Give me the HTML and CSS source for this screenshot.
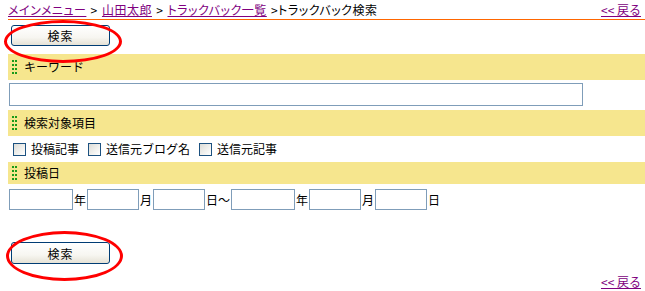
FILE: index.html
```html
<!DOCTYPE html>
<html lang="ja">
<head>
<meta charset="utf-8">
<title>トラックバック検索</title>
<link rel="stylesheet" href="styles.css">
</head>
<body>
<div class="page">
  <div class="header">
    <div class="crumbs"><a href="#">メインメニュー</a> &gt; <a href="#">山田太郎</a> &gt; <a href="#">トラックバック一覧</a> &gt;トラックバック検索</div>
    <a class="back" href="#">&lt;&lt; 戻る</a>
  </div>

  <div class="btn-row btn-row-top">
    <div class="btn-wrap mark-top"><button class="btn" type="button">検索</button></div>
  </div>

  <div class="sec"><span class="grip"><svg width="5" height="15" viewBox="0 0 5 15"><g fill="#1a9a1a"><rect x="0" y="0" width="2" height="2"/><rect x="3" y="0" width="2" height="2"/><rect x="0" y="4" width="2" height="2"/><rect x="3" y="4" width="2" height="2"/><rect x="0" y="8" width="2" height="2"/><rect x="3" y="8" width="2" height="2"/><rect x="0" y="12" width="2" height="2"/><rect x="3" y="12" width="2" height="2"/></g></svg></span><span class="sec-label">キーワード</span></div>
  <div class="kw-row"><input class="txt kw" type="text"></div>

  <div class="sec"><span class="grip"><svg width="5" height="15" viewBox="0 0 5 15"><g fill="#1a9a1a"><rect x="0" y="0" width="2" height="2"/><rect x="3" y="0" width="2" height="2"/><rect x="0" y="4" width="2" height="2"/><rect x="3" y="4" width="2" height="2"/><rect x="0" y="8" width="2" height="2"/><rect x="3" y="8" width="2" height="2"/><rect x="0" y="12" width="2" height="2"/><rect x="3" y="12" width="2" height="2"/></g></svg></span><span class="sec-label">検索対象項目</span></div>
  <div class="chk-row">
    <label class="chk"><input type="checkbox"><span>投稿記事</span></label>
    <label class="chk"><input type="checkbox"><span>送信元ブログ名</span></label>
    <label class="chk"><input type="checkbox"><span>送信元記事</span></label>
  </div>

  <div class="sec sec-short"><span class="grip"><svg width="5" height="15" viewBox="0 0 5 15"><g fill="#1a9a1a"><rect x="0" y="0" width="2" height="2"/><rect x="3" y="0" width="2" height="2"/><rect x="0" y="4" width="2" height="2"/><rect x="3" y="4" width="2" height="2"/><rect x="0" y="8" width="2" height="2"/><rect x="3" y="8" width="2" height="2"/><rect x="0" y="12" width="2" height="2"/><rect x="3" y="12" width="2" height="2"/></g></svg></span><span class="sec-label">投稿日</span></div>
  <div class="date-row">
    <input class="txt d-y" type="text"><span class="unit">年</span><input class="txt d-m" type="text"><span class="unit">月</span><input class="txt d-m" type="text"><span class="unit">日～</span><input class="txt d-y" type="text"><span class="unit">年</span><input class="txt d-m" type="text"><span class="unit">月</span><input class="txt d-m" type="text"><span class="unit">日</span>
  </div>

  <div class="btn-row btn-row-bottom">
    <div class="btn-wrap mark-bottom"><button class="btn btn-tall" type="button">検索</button></div>
  </div>

  <div class="footer"><a class="back" href="#">&lt;&lt; 戻る</a></div>
</div>
</body>
</html>
```

FILE: styles.css
```css
* { box-sizing: border-box; }
html, body { margin: 0; padding: 0; background: #fff; }
body {
  font-family: "Noto Sans CJK JP", "Noto Sans", sans-serif;
  font-size: 12px;
  color: #000;
  overflow: hidden;
}
.page {
  margin-left: 8px;
  width: 637px;
}
a { color: #800080; text-decoration: underline; }
.header {
  display: flex;
  justify-content: space-between;
  align-items: center;
  height: 20px;
  border-bottom: 1px solid #ff6600;
  padding-right: 4px;
  line-height: 19px;
}
.crumbs { white-space: nowrap; font-feature-settings: "palt"; letter-spacing: 0.5px; word-spacing: 1px; }
.back { white-space: nowrap; }
.btn-row {
  display: flex;
  padding-left: 3px;
}
.btn-row-top { margin-top: 5px; }
.btn-row-bottom { margin-top: 32px; }
.btn-wrap { position: relative; display: flex; }
.btn-wrap::before {
  content: "";
  position: absolute;
  border: 3px solid #ff0000;
  border-radius: 50%;
  pointer-events: none;
}
.mark-top::before { left: -7px; top: -5px; width: 112px; height: 37px; }
.mark-bottom::before { left: -5px; top: -11px; width: 111px; height: 44px; }
.btn {
  width: 99px;
  height: 21px;
  padding: 0;
  margin: 0;
  border: 1px solid #003c74;
  border-radius: 3px;
  background: linear-gradient(#ffffff 0%, #f7f6f1 60%, #e6e2d6 100%);
  font-family: inherit;
  font-size: 12px;
  line-height: 19px;
  color: #000;
  letter-spacing: 1px;
}
.btn-tall { height: 22px; }
.sec {
  display: flex;
  align-items: center;
  height: 26px;
  background: #f6e68e;
  margin-top: 4px;
}
.btn-row-top + .sec { margin-top: 8px; }
.sec-short { height: 22px; margin-top: 0; }
.grip { display: flex; margin-left: 4px; width: 12px; }
.sec-label { line-height: 16px; }
.kw-row { margin-top: 3px; padding-left: 1px; display: flex; }
.txt {
  border: 1px solid #7f9db9;
  background: #fff;
  margin: 0;
  padding: 0 2px;
  font-family: inherit;
  font-size: 12px;
}
.kw { width: 574px; height: 23px; }
.chk-row {
  display: flex;
  align-items: center;
  height: 26px;
  padding-left: 5px;
}
.chk {
  display: flex;
  align-items: center;
  margin-right: 9px;
}
.chk input {
  appearance: none;
  -webkit-appearance: none;
  width: 13px;
  height: 13px;
  margin: 0 5px 0 0;
  border: 1px solid #1c5180;
  background: linear-gradient(135deg, #dcdcd7 0%, #f2f2ef 60%, #ffffff 100%);
}
.chk span { line-height: 16px; }
.date-row {
  display: flex;
  align-items: center;
  margin-top: 5px;
  padding-left: 1px;
  height: 21px;
}
.d-y { width: 64px; height: 21px; }
.d-m { width: 52px; height: 21px; }
.unit { padding: 0 1px; line-height: 16px; }
.footer {
  display: flex;
  justify-content: flex-end;
  padding-right: 4px;
  margin-top: 9px;
  line-height: 17px;
}
```
